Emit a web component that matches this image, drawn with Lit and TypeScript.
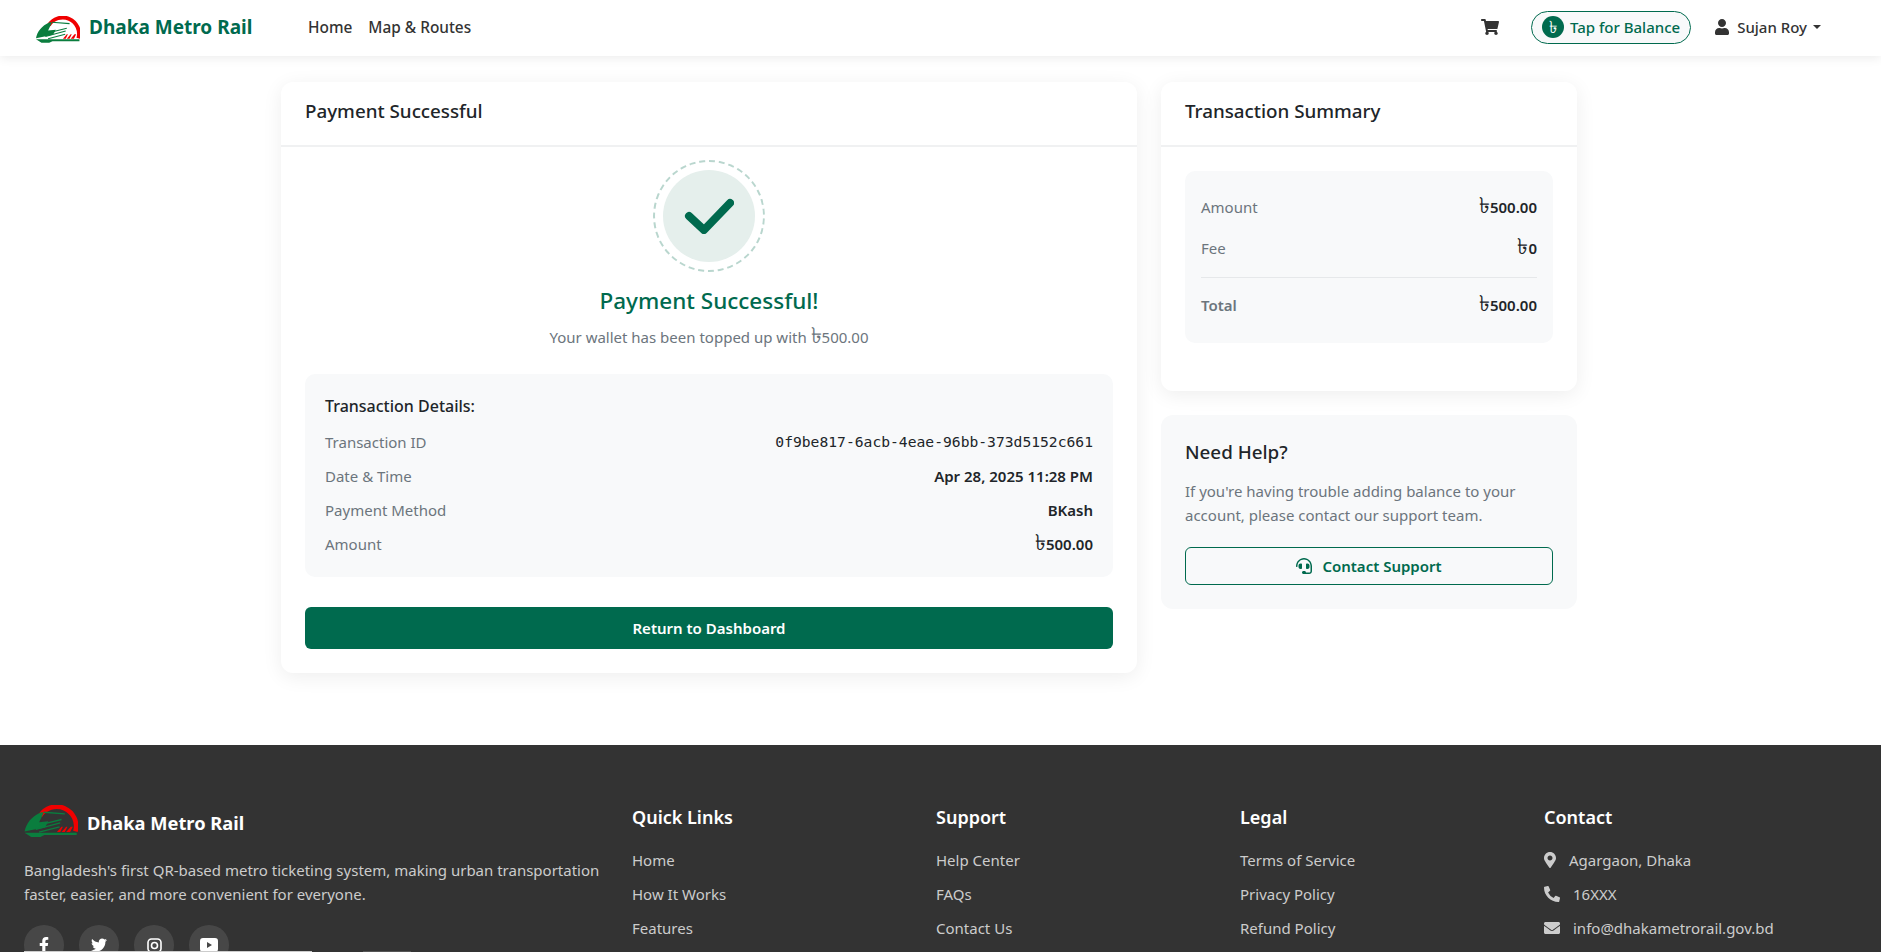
import { LitElement, html, css, svg } from 'lit';
import { customElement } from 'lit/decorators.js';

const icon = (vb: string, d: string) => html`<svg class="ico" viewBox=${vb} fill="currentColor"><path d=${d}></path></svg>`;
const money = (v: string) => html`<b><span class="tk">৳</span>${v}</b>`;

const CART = 'M528.12 301.319l47.273-208C578.806 78.301 567.391 64 551.99 64H159.208l-9.166-44.81C147.758 8.021 137.93 0 126.529 0H24C10.745 0 0 10.745 0 24v16c0 13.255 10.745 24 24 24h69.883l70.248 343.435C147.325 417.1 136 435.222 136 456c0 30.928 25.072 56 56 56s56-25.072 56-56c0-15.674-6.447-29.835-16.824-40h209.647C430.447 426.165 424 440.326 424 456c0 30.928 25.072 56 56 56s56-25.072 56-56c0-22.172-12.888-41.332-31.579-50.405l5.517-24.276c3.413-15.018-8.002-29.319-23.403-29.319H218.117l-6.545-32h293.145c11.206 0 20.92-7.754 23.403-18.681z';
const USER = 'M224 256c70.7 0 128-57.3 128-128S294.7 0 224 0 96 57.3 96 128s57.3 128 128 128zm89.6 32h-16.7c-22.2 10.2-46.9 16-72.9 16s-50.6-5.8-72.9-16h-16.7C60.2 288 0 348.2 0 422.4V464c0 26.5 21.5 48 48 48h352c26.5 0 48-21.5 48-48v-41.6c0-74.2-60.2-134.4-134.4-134.4z';
const PIN = 'M172.268 501.67C26.97 291.031 0 253.54 0 192 0 85.961 85.961 0 192 0s192 85.961 192 192c0 61.54-26.97 99.031-172.268 309.67-9.535 13.774-29.93 13.773-39.464 0zM192 272c44.183 0 80-35.817 80-80s-35.817-80-80-80-80 35.817-80 80 35.817 80 80 80z';
const PHONE = 'M497.39 361.8l-112-48a24 24 0 0 0-28 6.9l-49.6 60.6A370.66 370.66 0 0 1 130.6 204.11l60.6-49.6a23.94 23.94 0 0 0 6.9-28l-48-112A24.16 24.16 0 0 0 122.6.61l-104 24A24 24 0 0 0 0 48c0 256.5 207.9 464 464 464a24 24 0 0 0 23.4-18.6l24-104a24.29 24.29 0 0 0-14.01-27.6z';
const MAIL = 'M502.3 190.8c3.9-3.1 9.7-.2 9.7 4.7V400c0 26.5-21.5 48-48 48H48c-26.5 0-48-21.5-48-48V195.6c0-5 5.7-7.8 9.7-4.7 22.4 17.4 52.1 39.5 154.1 113.6 21.1 15.4 56.7 47.8 92.2 47.6 35.7.3 72-32.8 92.3-47.6 102-74.1 131.6-96.3 154-113.7zM256 320c23.2.4 56.6-29.2 73.4-41.4 132.7-96.3 142.8-104.7 173.4-128.7 5.8-4.5 9.2-11.5 9.2-18.9v-19c0-26.5-21.5-48-48-48H48C21.5 64 0 85.5 0 112v19c0 7.4 3.4 14.3 9.2 18.9 30.6 23.9 40.7 32.4 173.4 128.7 16.8 12.2 50.2 41.8 73.4 41.4z';
const FB = 'M279.14 288l14.22-92.66h-88.91v-60.13c0-25.35 12.42-50.06 52.24-50.06h40.42V6.26S260.43 0 225.36 0c-73.22 0-121.08 44.38-121.08 124.72v70.62H22.89V288h81.39v224h100.17V288z';
const TW = 'M459.37 151.716c.325 4.548.325 9.097.325 13.645 0 138.72-105.583 298.558-298.558 298.558-59.452 0-114.68-17.219-161.137-47.106 8.447.974 16.568 1.299 25.34 1.299 49.055 0 94.213-16.568 130.274-44.832-46.132-.975-84.792-31.188-98.112-72.772 6.498.974 12.995 1.624 19.818 1.624 9.421 0 18.843-1.3 27.614-3.573-48.081-9.747-84.143-51.98-84.143-102.985v-1.299c13.969 7.797 30.214 12.67 47.431 13.319-28.264-18.843-46.781-51.005-46.781-87.391 0-19.492 5.197-37.36 14.294-52.954 51.655 63.675 129.3 105.258 216.365 109.807-1.624-7.797-2.599-15.918-2.599-24.04 0-57.828 46.782-104.934 104.934-104.934 30.213 0 57.502 12.67 76.67 33.137 23.715-4.548 46.456-13.32 66.599-25.34-7.798 24.366-24.366 44.833-46.132 57.827 21.117-2.273 41.584-8.122 60.426-16.243-14.292 20.791-32.161 39.308-52.628 54.253z';
const HEADSET = 'M192 208c0-17.67-14.33-32-32-32h-16c-35.35 0-64 28.65-64 64v48c0 35.35 28.65 64 64 64h16c17.67 0 32-14.33 32-32V208zm176 144c35.35 0 64-28.65 64-64v-48c0-35.35-28.65-64-64-64h-16c-17.67 0-32 14.33-32 32v112c0 17.67 14.33 32 32 32h16zM256 0C113.18 0 4.58 118.83 0 256v16c0 8.84 7.16 16 16 16h16c8.84 0 16-7.16 16-16v-16c0-114.69 93.31-208 208-208s208 93.31 208 208h-.12c.08 2.43.12 165.72.12 165.72 0 23.35-18.93 42.28-42.28 42.28H320c0-26.51-21.49-48-48-48h-32c-26.51 0-48 21.49-48 48s21.49 48 48 48h181.72c49.86 0 90.28-40.42 90.28-90.28V256C507.42 118.83 398.82 0 256 0z';

// rough redraw of the metro logo: red arch, green train, red slashes
const logo = () => html`<svg class="logo" viewBox="0 0 160 97">
  ${svg`
    <path d="M47 33A59 59 0 0 1 154 80" fill="none" stroke="#f00000" stroke-width="14"></path>
    <path d="M0 80C4 58 20 34 50 22L58 23L44 52L72 49L62 68L22 76Z" fill="#0a7d3e"></path>
    <path d="M58 22L122 27M46 60L112 44M34 74L108 54M44 82L106 66" stroke="#0a7d3e" stroke-width="4" fill="none"></path>
    <path d="M0 84L158 84L158 91L60 91L48 97L20 97Z" fill="#0a7d3e"></path>
    <path d="M98 82L112 66L116 66L108 82ZM112 82L126 66L130 66L122 82ZM126 82L140 66L146 66L138 82Z" fill="#f00000"></path>
  `}
</svg>`;

@customElement('app-root')
export class AppRoot extends LitElement {
  static styles = css`
    :host {
      display: block;
      height: 952px;
      overflow: hidden;
      position: relative;
      background: #fff;
      color: #212529;
      font-family: 'Noto Sans', sans-serif;
      font-size: 15px;
      line-height: 24px;
    }
    .ico { display: block; height: 1em; width: auto; }
    .tk { font-size: 1.45em; line-height: 1px; font-weight: 400; }

    /* navbar */
    .nav {
      height: 56px;
      box-sizing: border-box;
      display: flex;
      align-items: center;
      padding: 0 60px 2px 36px;
      background: #fff;
      box-shadow: 0 2px 10px rgba(0, 0, 0, 0.08);
      position: relative;
    }
    .logo { display: block; width: 44px; height: 27px; }
    .brand { display: flex; align-items: center; gap: 9px; width: 272px; }
    .brand .logo { margin-top: 4px; }
    .brand b { font-size: 19px; font-weight: 700; color: #006a4e; }
    .links { display: flex; gap: 16px; flex: 1; color: #333; font-weight: 500; font-size: 15.4px; padding-top: 2px; }
    .cart { color: #333; font-size: 16px; margin-right: 32px; }
    .pill {
      display: flex;
      align-items: center;
      gap: 6px;
      height: 33px;
      box-sizing: border-box;
      padding: 0 10px;
      border: 1px solid #006a4e;
      border-radius: 17px;
      background: #f8f9fa;
      color: #006a4e;
      font-weight: 500;
      margin-right: 24px;
    }
    .coin {
      width: 22px;
      height: 22px;
      border-radius: 50%;
      background: #006a4e;
      color: #fff;
      font-size: 17px;
      line-height: 22px;
      text-align: center;
    }
    .user { display: flex; align-items: center; color: #333; font-weight: 500; }
    .user .ico { font-size: 16px; margin-right: 8px; }
    .caret {
      margin-left: 6px;
      border-top: 4px solid #333;
      border-left: 4px solid transparent;
      border-right: 4px solid transparent;
    }

    /* main area */
    .main {
      width: 1296px;
      margin: 26px 0 0 281px;
      display: grid;
      grid-template-columns: 856px 416px;
      gap: 24px;
      align-items: start;
    }
    .card {
      background: #fff;
      border-radius: 12px;
      box-shadow: 0 4px 20px rgba(0, 0, 0, 0.07);
    }
    .card-head {
      height: 65px;
      box-sizing: border-box;
      padding: 0 24px 5px;
      display: flex;
      align-items: center;
      border-bottom: 2px solid #f0f1f2;
      font-size: 18.8px;
      font-weight: 500;
    }
    .card-body { padding: 11px 24px 24px; }
    .ring-wrap { display: flex; justify-content: center; padding-top: 12px; }
    .ring {
      width: 92px;
      height: 92px;
      border-radius: 50%;
      background: #e5efec;
      position: relative;
      display: flex;
      align-items: center;
      justify-content: center;
    }
    .ring::after {
      content: '';
      position: absolute;
      inset: -10px;
      border-radius: 50%;
      border: 2px dashed #b9d6ce;
    }
    .ok-title {
      text-align: center;
      margin: 24px 0 0;
      font-size: 22.5px;
      line-height: 30px;
      font-weight: 500;
      color: #006a4e;
    }
    .ok-sub { text-align: center; color: #6c757d; margin: 9px 0 0; font-size: 15px; }
    .details {
      margin-top: 25px;
      background: #f8f9fa;
      border-radius: 10px;
      padding: 20px;
      height: 203px;
      box-sizing: border-box;
    }
    .details h3 { margin: 0 0 7px; font-size: 16px; line-height: 24px; font-weight: 500; }
    .row { display: flex; justify-content: space-between; height: 34px; align-items: center; color: #6c757d; }
    .row b { color: #212529; font-weight: 600; }
    .row code { color: #212529; font-family: 'DejaVu Sans Mono', 'Liberation Mono', monospace; font-size: 14.67px; }
    .primary {
      margin-top: 30px;
      height: 42px;
      border-radius: 6px;
      background: #006a4e;
      color: #fff;
      font-weight: 600;
      display: flex;
      align-items: center;
      justify-content: center;
    }
    .side { display: grid; gap: 24px; }
    .sum-body { padding: 24px 24px 48px; }
    .sum {
      background: #f8f9fa;
      border-radius: 10px;
      padding: 15px 16px;
      height: 172px;
      box-sizing: border-box;
    }
    .sum .row { height: 41px; }
    .sum hr { border: 0; border-top: 1px solid #e6e8ea; margin: 9px 0 6px; }
    .sum .total { font-weight: 600; }
    .help { background: #f8f9fa; border-radius: 12px; padding: 24px; height: 194px; box-sizing: border-box; }
    .help h3 { margin: 0; font-size: 18.8px; line-height: 26px; font-weight: 500; }
    .help p { margin: 14px 0 0; color: #6c757d; }
    .outline {
      margin-top: 20px;
      height: 38px;
      box-sizing: border-box;
      border: 1px solid #006a4e;
      border-radius: 6px;
      color: #006a4e;
      font-weight: 600;
      display: flex;
      align-items: center;
      justify-content: center;
      gap: 10px;
    }
    .outline .ico { font-size: 16px; }

    /* footer */
    .foot {
      position: absolute;
      top: 745px;
      left: 0;
      right: 0;
      height: 300px;
      background: #333;
      color: #ccc;
      padding: 48px 45px 0 12px;
      display: grid;
      grid-template-columns: 2fr 1fr 1fr 1fr 1fr;
    }
    .fcol { padding: 0 12px; }
    .fbrand { display: flex; align-items: center; gap: 9px; color: #fff; font-weight: 700; font-size: 18.3px; height: 32px; margin-top: 12px; }
    .fbrand .logo { width: 54px; height: 32px; }
    .fbrand span { padding-top: 3px; }
    .fdesc { margin: 21px 0 0; line-height: 24px; }
    .socials { display: flex; gap: 15px; margin-top: 19px; }
    .socials a {
      width: 40px;
      height: 40px;
      border-radius: 50%;
      background: rgba(255, 255, 255, 0.1);
      color: #fff;
      display: flex;
      align-items: center;
      justify-content: center;
      font-size: 16px;
    }
    .fcol h4 { margin: 12px 0 19px; color: #fff; font-size: 18px; line-height: 24px; font-weight: 600; }
    .fcol ul { list-style: none; margin: 0; padding: 0; display: grid; row-gap: 10px; }
    .fcol li { display: flex; align-items: center; gap: 13px; }
    .fcol li .ico { font-size: 16px; }
    .edge { position: absolute; left: 0; top: 951px; height: 1px; width: 100%; }
    .edge i { position: absolute; top: 0; height: 1px; }
    .e1 { left: 24px; width: 288px; background: #ccc; }
    .e2 { left: 363px; width: 48px; background: #555; }
  `;

  private row(label: string, value: unknown) {
    return html`<div class="row"><span>${label}</span>${value}</div>`;
  }

  render() {
    return html`
      <nav class="nav">
        <div class="brand">${logo()}<b>Dhaka Metro Rail</b></div>
        <div class="links"><span>Home</span><span>Map &amp; Routes</span></div>
        <div class="cart">${icon('0 0 576 512', CART)}</div>
        <div class="pill"><span class="coin">৳</span>Tap for Balance</div>
        <div class="user">${icon('0 0 448 512', USER)}Sujan Roy<span class="caret"></span></div>
      </nav>

      <div class="main">
        <section class="card">
          <div class="card-head">Payment Successful</div>
          <div class="card-body">
            <div class="ring-wrap">
              <div class="ring">
                <svg width="50" height="36" viewBox="0 0 50 36" fill="none" stroke="#006a4e" stroke-width="8" stroke-linecap="round" stroke-linejoin="round">
                  <path d="M5 18L20 32L46 5"></path>
                </svg>
              </div>
            </div>
            <h2 class="ok-title">Payment Successful!</h2>
            <p class="ok-sub">Your wallet has been topped up with <span class="tk">৳</span>500.00</p>
            <div class="details">
              <h3>Transaction Details:</h3>
              ${this.row('Transaction ID', html`<code>0f9be817-6acb-4eae-96bb-373d5152c661</code>`)}
              ${this.row('Date & Time', html`<b>Apr 28, 2025 11:28 PM</b>`)}
              ${this.row('Payment Method', html`<b>BKash</b>`)}
              ${this.row('Amount', money('500.00'))}
            </div>
            <div class="primary">Return to Dashboard</div>
          </div>
        </section>

        <div class="side">
          <section class="card">
            <div class="card-head">Transaction Summary</div>
            <div class="sum-body">
              <div class="sum">
                ${this.row('Amount', money('500.00'))}
                ${this.row('Fee', money('0'))}
                <hr />
                <div class="row total"><span>Total</span>${money('500.00')}</div>
              </div>
            </div>
          </section>
          <section class="help">
            <h3>Need Help?</h3>
            <p>If you're having trouble adding balance to your account, please contact our support team.</p>
            <div class="outline">${icon('0 0 512 512', HEADSET)}Contact Support</div>
          </section>
        </div>
      </div>

      <footer class="foot">
        <div class="fcol">
          <div class="fbrand">${logo()}<span>Dhaka Metro Rail</span></div>
          <p class="fdesc">Bangladesh's first QR-based metro ticketing system, making urban transportation faster, easier, and more convenient for everyone.</p>
          <div class="socials">
            <a>${icon('0 0 320 512', FB)}</a>
            <a>${icon('0 0 512 512', TW)}</a>
            <a><svg width="15" height="15" viewBox="0 0 15 15" fill="none" stroke="#fff" stroke-width="1.6"><rect x="1" y="1" width="13" height="13" rx="3.5"></rect><circle cx="7.5" cy="7.5" r="3"></circle></svg></a>
            <a><svg width="18" height="14" viewBox="0 0 18 14"><path fill="#fff" fill-rule="evenodd" d="M3 0H15A3 3 0 0 1 18 3V11A3 3 0 0 1 15 14H3A3 3 0 0 1 0 11V3A3 3 0 0 1 3 0ZM7 4V10L12 7Z"></path></svg></a>
          </div>
        </div>
        <div class="fcol">
          <h4>Quick Links</h4>
          <ul><li>Home</li><li>How It Works</li><li>Features</li></ul>
        </div>
        <div class="fcol">
          <h4>Support</h4>
          <ul><li>Help Center</li><li>FAQs</li><li>Contact Us</li></ul>
        </div>
        <div class="fcol">
          <h4>Legal</h4>
          <ul><li>Terms of Service</li><li>Privacy Policy</li><li>Refund Policy</li></ul>
        </div>
        <div class="fcol">
          <h4>Contact</h4>
          <ul>
            <li>${icon('0 0 384 512', PIN)}Agargaon, Dhaka</li>
            <li>${icon('0 0 512 512', PHONE)}16XXX</li>
            <li>${icon('0 0 512 512', MAIL)}info@dhakametrorail.gov.bd</li>
          </ul>
        </div>
      </footer>
      <div class="edge"><i class="e1"></i><i class="e2"></i></div>
    `;
  }
}
